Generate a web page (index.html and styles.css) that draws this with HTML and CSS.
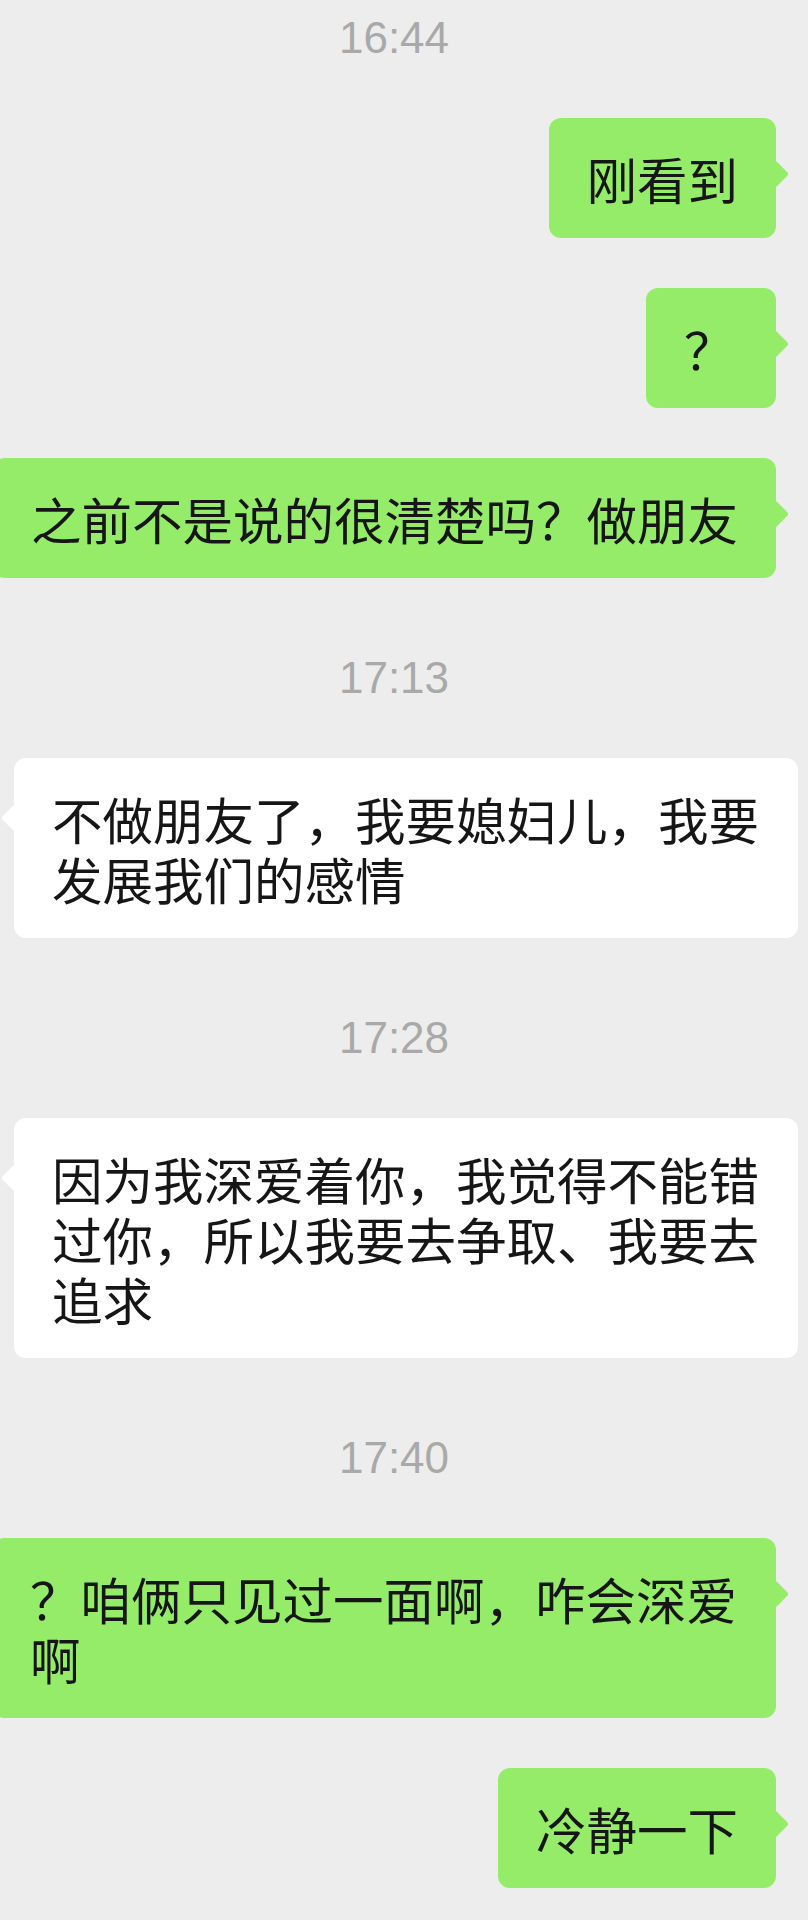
FILE: index.html
```html
<!DOCTYPE html>
<html lang="zh-CN">
<head>
<meta charset="utf-8">
<title>聊天记录</title>
<link rel="stylesheet" href="styles.css">
</head>
<body>
<div class="chat">
  <div class="time">16:44</div>
  <div class="row me"><div class="bubble">刚看到</div></div>
  <div class="row me"><div class="bubble">？</div></div>
  <div class="row me"><div class="bubble">之前不是说的很清楚吗？做朋友</div></div>
  <div class="time">17:13</div>
  <div class="row other"><div class="bubble">不做朋友了，我要媳妇儿，我要发展我们的感情</div></div>
  <div class="time">17:28</div>
  <div class="row other"><div class="bubble">因为我深爱着你，我觉得不能错过你，所以我要去争取、我要去追求</div></div>
  <div class="time">17:40</div>
  <div class="row me"><div class="bubble">？咱俩只见过一面啊，咋会深爱啊</div></div>
  <div class="row me"><div class="bubble">冷静一下</div></div>
</div>
</body>
</html>
```
FILE: styles.css
```css
html, body {
  margin: 0;
  padding: 0;
  background: #ededed;
}

.chat {
  width: 808px;
  min-height: 1920px;
  box-sizing: border-box;
  padding: 16px 0 28px;
  display: flex;
  flex-direction: column;
  overflow: hidden;
  background: #ededed;
}

.time {
  font-family: "Liberation Sans", Arial, sans-serif;
  font-size: 44px;
  line-height: 44px;
  color: #a9a9a9;
  text-align: center;
  padding-right: 20px;
  margin: 78px 0 58px;
}

.time:first-child {
  margin-top: 0;
}

.row {
  display: flex;
}

.row + .row {
  margin-top: 50px;
}

.row.me {
  justify-content: flex-end;
  padding-right: 32px;
}

.row.other {
  justify-content: flex-start;
  padding-left: 14px;
}

.bubble {
  position: relative;
  flex-shrink: 0;
  box-sizing: border-box;
  max-width: 784px;
  min-width: 130px;
  padding: 30px 38px;
  border-radius: 12px;
  font-family: "Noto Sans CJK SC", "Noto Sans", sans-serif;
  font-size: 50.5px;
  line-height: 60px;
  color: #161616;
  word-break: break-all;
}

.me .bubble {
  background: #95ec69;
}

.other .bubble {
  background: #ffffff;
}

.bubble::after {
  content: "";
  position: absolute;
  width: 20px;
  height: 20px;
  background: inherit;
  border-radius: 3px;
  transform: rotate(45deg);
}

.me .bubble::after {
  right: -9px;
  top: 46px;
}

.other .bubble::after {
  left: -9px;
  top: 50px;
}
```
